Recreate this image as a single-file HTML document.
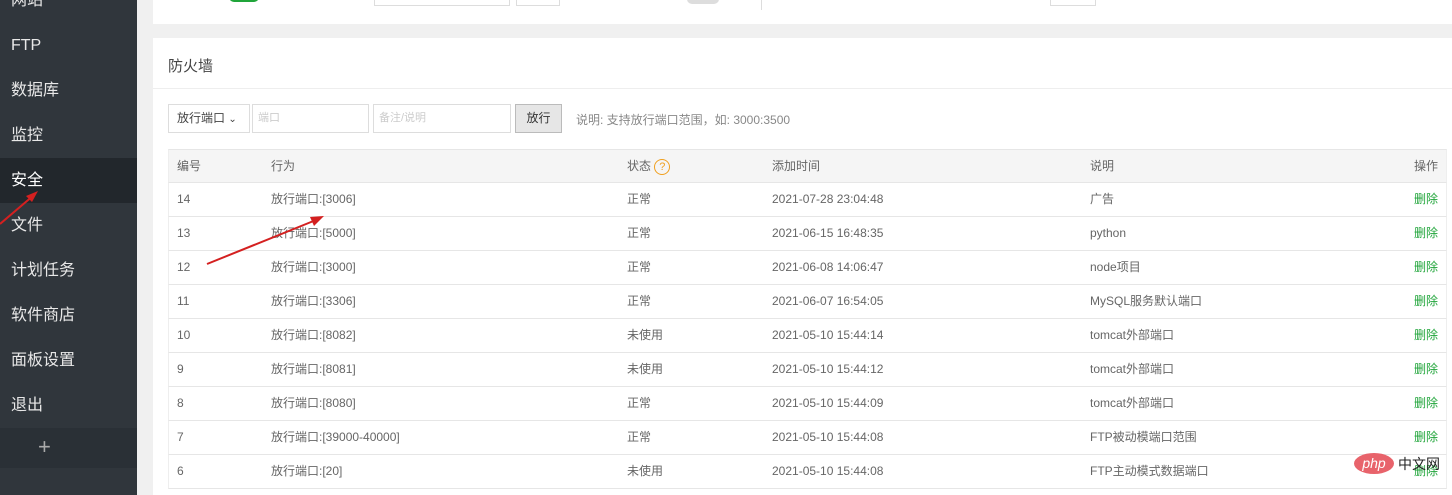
<!DOCTYPE html>
<html><head><meta charset="utf-8"><style>
*{margin:0;padding:0;box-sizing:border-box}
body{width:1452px;height:495px;overflow:hidden;background:#f0f0f0;font-family:"Liberation Sans","Noto Sans CJK SC",sans-serif;position:relative}
.side{position:absolute;left:0;top:0;width:137px;height:495px;background:#30363c}
.side div{position:absolute;left:0;width:137px;height:45px;line-height:45px;padding-left:11px;color:#e8e8e8;font-size:16px}
.side .act{background:#22272c;color:#fff}
.card{position:absolute;left:153px;background:#fff}
.t{position:absolute;font-size:12px;color:#555;white-space:nowrap}
.row{position:absolute;left:168px;width:1279px;height:34px;border-bottom:1px solid #e6e6e6;border-left:1px solid #eee;border-right:1px solid #eee;font-size:12px;color:#666}
.row span{position:absolute;top:0;height:33px;line-height:33px;white-space:nowrap;display:flex;align-items:center}
.g{color:#20a53a}
</style></head><body>
<div class="side">
<div style="top:-22px">网站</div>
<div style="top:23px">FTP</div>
<div style="top:68px">数据库</div>
<div style="top:113px">监控</div>
<div class="act" style="top:158px">安全</div>
<div style="top:203px">文件</div>
<div style="top:248px">计划任务</div>
<div style="top:293px">软件商店</div>
<div style="top:338px">面板设置</div>
<div style="top:383px">退出</div>
<div style="top:428px;background:#2a3036;padding-left:38px;font-size:22px;color:#aaa;height:40px;line-height:38px">+</div>
</div>
<div class="card" style="top:0;width:1299px;height:24px">
<div style="position:absolute;left:76px;top:-8px;width:30px;height:10px;border-radius:5px;background:#20a53a"></div>
<div style="position:absolute;left:221px;top:-2px;width:136px;height:8px;border:1px solid #ddd;border-top:none"></div>
<div style="position:absolute;left:363px;top:-2px;width:44px;height:8px;border:1px solid #ddd;border-top:none"></div>
<div style="position:absolute;left:534px;top:-6px;width:32px;height:10px;border-radius:5px;background:#ddd"></div>
<div style="position:absolute;left:608px;top:0;width:1px;height:10px;background:#ddd"></div>
<div style="position:absolute;left:897px;top:-2px;width:46px;height:8px;border:1px solid #ddd;border-top:none"></div>
</div>
<div class="card" style="top:38px;width:1299px;height:457px">
<div style="position:absolute;left:15px;top:17px;font-size:15px;color:#444">防火墙</div>
<div style="position:absolute;left:0;top:50px;width:1299px;height:1px;background:#eee"></div>
</div>
<div style="position:absolute;left:168px;top:104px;width:82px;height:29px;border:1px solid #ddd;font-size:12px;color:#444;line-height:27px;padding-left:8px">放行端口 <span style="font-size:10px">⌄</span></div>
<div style="position:absolute;left:252px;top:104px;width:117px;height:29px;border:1px solid #ddd;font-size:11px;color:#ccc;line-height:27px;padding-left:5px">端口</div>
<div style="position:absolute;left:373px;top:104px;width:138px;height:29px;border:1px solid #ddd;font-size:11px;color:#ccc;line-height:27px;padding-left:5px">备注/说明</div>
<div style="position:absolute;left:515px;top:104px;width:47px;height:29px;border:1px solid #bbb;background:#e6e6e6;font-size:12px;color:#333;line-height:27px;text-align:center">放行</div>
<div class="t" style="left:576px;top:111px;color:#888">说明: 支持放行端口范围，如: 3000:3500</div>
<div class="row" style="top:149px;height:34px;background:#f5f5f5;border-top:1px solid #e6e6e6"><span style="left:8px">编号</span><span style="left:102px">行为</span><span style="left:458px">状态&nbsp;<b style="display:inline-block;width:16px;height:16px;border:1px solid #f0a020;border-radius:50%;color:#f0a020;font-size:11px;text-align:center;line-height:14px;font-weight:normal">?</b></span><span style="left:603px">添加时间</span><span style="left:921px">说明</span><span style="right:8px">操作</span></div>
<div class="row" style="top:183px"><span style="left:8px">14</span><span style="left:102px">放行端口:[3006]</span><span style="left:458px">正常</span><span style="left:603px">2021-07-28 23:04:48</span><span style="left:921px">广告</span><span class="g" style="right:8px">删除</span></div>
<div class="row" style="top:217px"><span style="left:8px">13</span><span style="left:102px">放行端口:[5000]</span><span style="left:458px">正常</span><span style="left:603px">2021-06-15 16:48:35</span><span style="left:921px">python</span><span class="g" style="right:8px">删除</span></div>
<div class="row" style="top:251px"><span style="left:8px">12</span><span style="left:102px">放行端口:[3000]</span><span style="left:458px">正常</span><span style="left:603px">2021-06-08 14:06:47</span><span style="left:921px">node项目</span><span class="g" style="right:8px">删除</span></div>
<div class="row" style="top:285px"><span style="left:8px">11</span><span style="left:102px">放行端口:[3306]</span><span style="left:458px">正常</span><span style="left:603px">2021-06-07 16:54:05</span><span style="left:921px">MySQL服务默认端口</span><span class="g" style="right:8px">删除</span></div>
<div class="row" style="top:319px"><span style="left:8px">10</span><span style="left:102px">放行端口:[8082]</span><span style="left:458px">未使用</span><span style="left:603px">2021-05-10 15:44:14</span><span style="left:921px">tomcat外部端口</span><span class="g" style="right:8px">删除</span></div>
<div class="row" style="top:353px"><span style="left:8px">9</span><span style="left:102px">放行端口:[8081]</span><span style="left:458px">未使用</span><span style="left:603px">2021-05-10 15:44:12</span><span style="left:921px">tomcat外部端口</span><span class="g" style="right:8px">删除</span></div>
<div class="row" style="top:387px"><span style="left:8px">8</span><span style="left:102px">放行端口:[8080]</span><span style="left:458px">正常</span><span style="left:603px">2021-05-10 15:44:09</span><span style="left:921px">tomcat外部端口</span><span class="g" style="right:8px">删除</span></div>
<div class="row" style="top:421px"><span style="left:8px">7</span><span style="left:102px">放行端口:[39000-40000]</span><span style="left:458px">正常</span><span style="left:603px">2021-05-10 15:44:08</span><span style="left:921px">FTP被动模端口范围</span><span class="g" style="right:8px">删除</span></div>
<div class="row" style="top:455px"><span style="left:8px">6</span><span style="left:102px">放行端口:[20]</span><span style="left:458px">未使用</span><span style="left:603px">2021-05-10 15:44:08</span><span style="left:921px">FTP主动模式数据端口</span><span class="g" style="right:8px">删除</span></div>
<svg style="position:absolute;left:0;top:0" width="1452" height="495">
<line x1="0" y1="224" x2="34" y2="195" stroke="#d42020" stroke-width="2"/>
<polygon points="38,191 26,196 32,202" fill="#d42020"/>
<line x1="207" y1="264" x2="316" y2="220" stroke="#d42020" stroke-width="2"/>
<polygon points="324,216 310,217 314,226" fill="#d42020"/>
</svg>
<div style="position:absolute;left:1354px;top:453px;width:40px;height:21px;border-radius:50%;background:#e8636b;color:#fff;font-size:14px;font-style:italic;text-align:center;line-height:20px">php</div>
<div style="position:absolute;left:1398px;top:454px;font-size:14px;color:#222">中文网</div>
</body></html>
